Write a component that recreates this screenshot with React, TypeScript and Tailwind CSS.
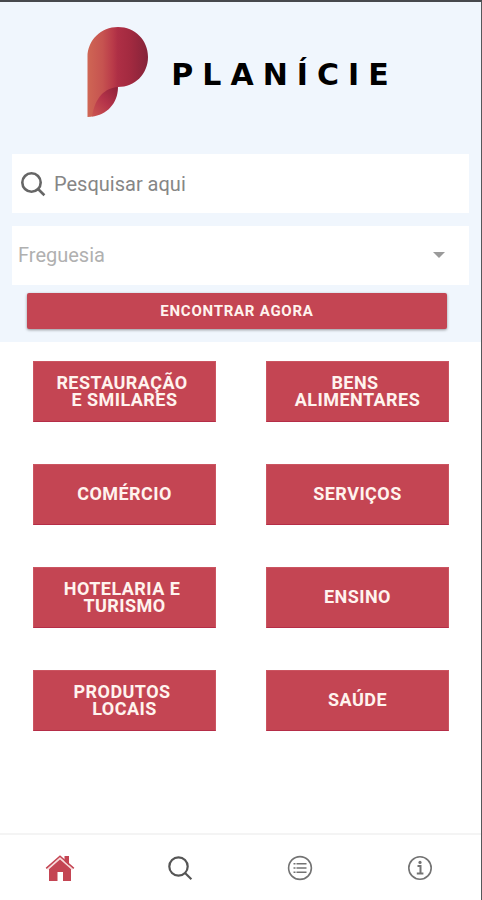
const categories = [
  "RESTAURAÇÃO \nE SMILARES",
  "BENS \nALIMENTARES",
  "COMÉRCIO",
  "SERVIÇOS",
  "HOTELARIA E \nTURISMO",
  "ENSINO",
  "PRODUTOS \nLOCAIS",
  "SAÚDE",
];

function LogoMark() {
  return (
    <svg width="62" height="92" viewBox="0 0 62 92" aria-hidden="true">
      <defs>
        <linearGradient id="head" x1="0" y1="0" x2="1" y2="0">
          <stop offset="0" stopColor="#cf6654" />
          <stop offset="0.25" stopColor="#c65350" />
          <stop offset="0.42" stopColor="#b93a49" />
          <stop offset="0.5" stopColor="#ae2f45" />
          <stop offset="0.7" stopColor="#a32a40" />
          <stop offset="1" stopColor="#852339" />
        </linearGradient>
        <linearGradient id="tail" x1="0" y1="1" x2="1" y2="0">
          <stop offset="0" stopColor="#cb5650" />
          <stop offset="0.5" stopColor="#b5344a" />
          <stop offset="1" stopColor="#8e2039" />
        </linearGradient>
      </defs>
      <path d="M0.5 91V31C0.5 14 14 1 31 1S61 14 61 31S48 61 31 61L18 74L7 90Q4 91 0.5 91Z" fill="url(#head)" />
      <path d="M31 61C18 62 8 71 5 90.6C19 89 31 78 31 61Z" fill="url(#tail)" />
    </svg>
  );
}

function SearchIcon({ className }: { className: string }) {
  return (
    <svg width="26" height="26" viewBox="0 0 26 26" fill="none" stroke="currentColor" className={className} aria-hidden="true">
      <circle cx="11.5" cy="11.5" r="9.2" />
      <path d="M17.8 17.8L24.4 24.2" />
    </svg>
  );
}

function HomeIcon() {
  return (
    <svg width="30" height="28" viewBox="0 0 30 28" fill="#c44553" aria-hidden="true">
      <path d="M19.5 2H24V13L19.5 9Z" />
      <path d="M15 4L26 14.5V27H18V18H12.5V27H4V14.5Z" />
      <path d="M2.5 15.5L15 4.4L27.5 15.5" fill="none" stroke="#f8dcdc" strokeWidth="1.6" />
      <path d="M1.2 14.4L15 2.2L28.8 14.4" fill="none" stroke="#c44553" strokeWidth="1.6" />
    </svg>
  );
}

function ListIcon() {
  return (
    <svg width="26" height="26" viewBox="0 0 26 26" fill="none" stroke="#737373" strokeWidth="1.6" aria-hidden="true">
      <circle cx="13" cy="13" r="11.4" />
      <path d="M6.5 8.8H8.5M9.5 8.8H19.5M6.5 13H8.5M9.5 13H19.5M6.5 17.2H8.5M9.5 17.2H19.5" />
    </svg>
  );
}

function InfoIcon() {
  return (
    <svg width="26" height="26" viewBox="0 0 26 26" fill="none" stroke="#737373" strokeWidth="1.6" aria-hidden="true">
      <circle cx="13" cy="13" r="11.2" />
      <circle cx="13" cy="7.4" r="1.6" fill="#737373" stroke="none" />
      <path d="M10.5 11H13.5V18" strokeWidth="2" />
      <path d="M9.8 18.5H16.4" strokeWidth="2" />
    </svg>
  );
}

export default function App() {
  return (
    <div className="flex min-h-screen flex-col border-t-2 border-r border-t-[#47494d] border-r-[#55575a] bg-white font-['Roboto',sans-serif]">
      {/* Header */}
      <header className="bg-[#f0f6fd] pb-[13px]">
        <div className="flex items-start justify-center gap-[22px] pt-6 pl-1">
          <LogoMark />
          <h1 className="pt-[31px] font-['DejaVu_Sans',sans-serif] text-[30px] leading-9 font-bold tracking-[0.3em] text-black">
            PLANÍCIE
          </h1>
        </div>

        <form className="mt-9 px-3" onSubmit={(e) => e.preventDefault()}>
          <label className="flex h-[59px] items-center gap-2 bg-white pl-2">
            <SearchIcon className="stroke-[2.6] text-[#666]" />
            <input
              type="text"
              aria-label="Pesquisar"
              placeholder="Pesquisar aqui"
              className="min-w-0 flex-1 text-xl outline-none placeholder:text-[#868686]"
            />
          </label>
          <div className="relative mt-[13px]">
            <select
              aria-label="Freguesia"
              className="h-[59px] w-full appearance-none bg-white px-[6px] pb-0.5 text-xl text-[#b0b0b0] outline-none"
            >
              <option>Freguesia</option>
            </select>
            <svg width="12" height="6" viewBox="0 0 12 6" className="pointer-events-none absolute top-[26px] right-6" aria-hidden="true">
              <path d="M0 0H12L6 6Z" fill="#9a9a9a" />
            </svg>
          </div>
          <div className="mt-2 pr-[22px] pl-[15px]">
            <button
              type="submit"
              className="h-9 w-full rounded-xs bg-[#c44553] text-[15px] font-bold tracking-wider text-[#fff3ee] shadow-[0_1px_3px_rgba(0,0,0,0.4)]"
            >
              ENCONTRAR AGORA
            </button>
          </div>
        </form>
      </header>

      {/* Categories */}
      <main className="grid flex-1 grid-cols-2 content-start gap-x-[50px] gap-y-[42px] pt-[19px] pr-8 pb-8 pl-[33px]">
        {categories.map((name) => (
          <button
            key={name}
            type="button"
            className="h-[61px] border border-[#cb5561] border-b-[#b52d47] bg-[#c44553] pb-0.5 text-lg leading-[17px] font-bold tracking-wide whitespace-pre text-[#fff3ee]"
          >
            {name}
          </button>
        ))}
      </main>

      {/* Bottom nav */}
      <nav className="grid h-[67px] grid-cols-4 border-t-2 border-[#f4f4f4] pr-px">
        <a href="#inicio" aria-label="Início" className="flex items-center justify-center">
          <HomeIcon />
        </a>
        <a href="#pesquisa" aria-label="Pesquisa" className="flex items-center justify-center">
          <SearchIcon className="stroke-[2.2] text-[#555]" />
        </a>
        <a href="#lista" aria-label="Lista" className="flex items-center justify-center">
          <ListIcon />
        </a>
        <a href="#info" aria-label="Informações" className="flex items-center justify-center">
          <InfoIcon />
        </a>
      </nav>
    </div>
  );
}
